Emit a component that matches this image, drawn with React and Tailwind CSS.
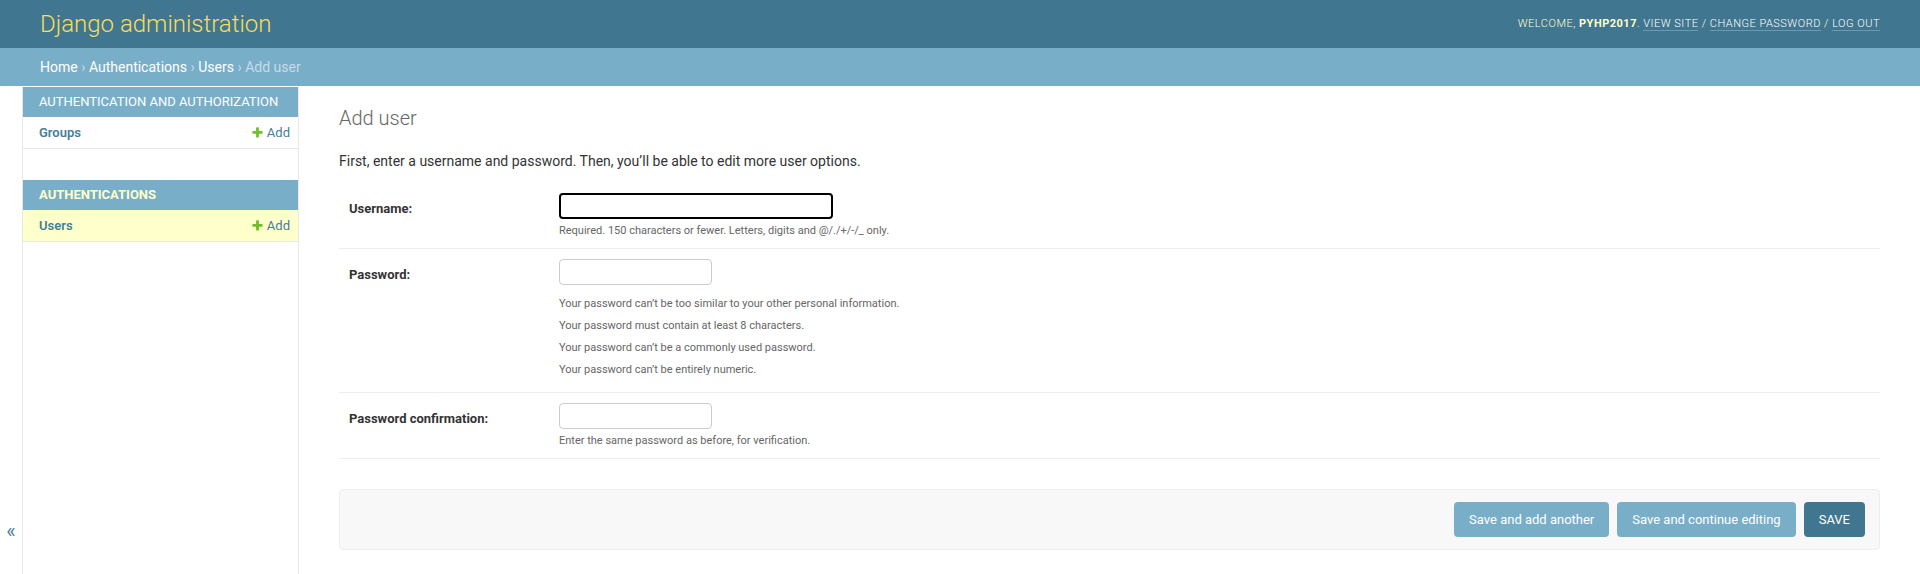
import React from 'react';

const PlusIcon = () => (
  <svg width="13" height="13" viewBox="0 0 1792 1792" className="absolute left-0 top-[1px]">
    <path
      fill="#70bf2b"
      d="M1600 796v192q0 40-28 68t-68 28h-416v416q0 40-28 68t-68 28h-192q-40 0-68-28t-28-68v-416h-416q-40 0-68-28t-28-68v-192q0-40 28-68t68-28h416v-416q0-40 28-68t68-28h192q40 0 68 28t28 68v416h416q40 0 68 28t28 68z"
    />
  </svg>
);

const SidebarModule = ({ caption, current, models }) => (
  <div className="mb-[31px]">
    <div
      className={`flex h-[30px] items-center whitespace-nowrap pl-[16px] pr-[8px] text-[13px] uppercase ${
        current ? 'bg-[#79aec8] font-bold text-[#ffffcc]' : 'bg-[#79aec8] font-normal text-white'
      }`}
    >
      {caption}
    </div>
    {models.map((m) => (
      <div
        key={m.name}
        className={`flex h-[32px] items-start justify-between border-b border-[#e8e8e8] pl-[16px] pr-[8px] pt-[8px] text-[13px] leading-[16px] ${
          m.current ? 'bg-[#ffffcc]' : 'bg-white'
        }`}
      >
        <a className="font-semibold text-[#447e9b]">{m.name}</a>
        <a className="relative pl-[16px] text-[#447e9b]">
          <PlusIcon />
          Add
        </a>
      </div>
    ))}
  </div>
);

const FormRow = ({ label, focused, wide, children }) => (
  <div className="flex border-b border-[#eeeeee] px-[10px] pt-[10px]">
    <label className="mt-[8px] w-[210px] shrink-0 text-[13px] font-bold leading-[16px] text-[#333]">{label}</label>
    <div className="flex flex-col">
      <div
        className={`h-[26px] rounded-[4px] bg-white ${wide ? 'w-[274px]' : 'w-[153px]'} ${
          focused ? 'border-2 border-black' : 'border border-[#cccccc]'
        }`}
      />
      {children}
    </div>
  </div>
);

const App = () => {
  const passwordHelp = [
    'Your password can’t be too similar to your other personal information.',
    'Your password must contain at least 8 characters.',
    'Your password can’t be a commonly used password.',
    'Your password can’t be entirely numeric.',
  ];

  return (
    <div className="flex min-h-[574px] flex-col bg-white font-[Roboto,'Lucida_Grande',sans-serif] text-[14px] text-[#333]">
      <header className="flex h-[48px] items-center justify-between bg-[#417690] px-[40px]">
        <h1 className="text-[24px] font-light leading-[28px] text-[#f5dd5d]">Django administration</h1>
        <div className="text-[11px] font-light uppercase leading-[14px] tracking-[0.5px] text-[#ffffcc]">
          Welcome, <strong className="font-bold">pyhp2017</strong>.{' '}
          <a className="border-b border-white/25 text-white">View site</a> /{' '}
          <a className="border-b border-white/25 text-white">Change password</a> /{' '}
          <a className="border-b border-white/25 text-white">Log out</a>
        </div>
      </header>

      <div className="flex h-[38px] items-center bg-[#79aec8] px-[40px] text-[14px] leading-[18px] text-[#c4dce8]">
        <a className="text-white">Home</a>
        <span className="px-[3.5px]">›</span>
        <a className="text-white">Authentications</a>
        <span className="px-[3.5px]">›</span>
        <a className="text-white">Users</a>
        <span className="px-[3.5px]">›</span>
        <span>Add user</span>
      </div>

      <div className="flex flex-1">
        <div className="flex w-[23px] shrink-0 justify-center border-r border-[#e8e8e8] pt-[433px] text-[20px] leading-[24px] text-[#447e9b]">
          «
        </div>

        <nav className="w-[276px] shrink-0 border-r border-[#e8e8e8] pt-[1px]">
          <SidebarModule
            caption="Authentication and Authorization"
            models={[{ name: 'Groups' }]}
          />
          <SidebarModule
            caption="Authentications"
            current
            models={[{ name: 'Users', current: true }]}
          />
        </nav>

        <main className="flex-1 px-[40px] pb-[20px] pt-[20px]">
          <h1 className="mb-[21px] text-[20px] font-light leading-[24px] text-[#666]">Add user</h1>
          <p className="mb-[12px] leading-[20px]">
            First, enter a username and password. Then, you’ll be able to edit more user options.
          </p>

          <div>
            <FormRow label="Username:" focused wide>
              <div className="mb-[10px] mt-[5px] text-[11px] leading-[14px] text-[#666]">
                Required. 150 characters or fewer. Letters, digits and @/./+/-/_ only.
              </div>
            </FormRow>
            <FormRow label="Password:">
              <ul className="mb-[11px] mt-[8px] text-[11px] text-[#666]">
                {passwordHelp.map((t) => (
                  <li key={t} className="h-[22px] leading-[22px]">
                    {t}
                  </li>
                ))}
              </ul>
            </FormRow>
            <FormRow label="Password confirmation:">
              <div className="mb-[10px] mt-[5px] text-[11px] leading-[14px] text-[#666]">
                Enter the same password as before, for verification.
              </div>
            </FormRow>
          </div>

          <div className="mt-[30px] flex justify-end gap-[8px] rounded-[4px] border border-[#eeeeee] bg-[#f8f8f8] px-[14px] py-[12px]">
            <button className="h-[35px] rounded-[4px] bg-[#79aec8] px-[15px] text-[13px] text-white">
              Save and add another
            </button>
            <button className="h-[35px] rounded-[4px] bg-[#79aec8] px-[15px] text-[13px] text-white">
              Save and continue editing
            </button>
            <button className="h-[35px] rounded-[4px] bg-[#417690] px-[15px] text-[13px] uppercase text-white">
              Save
            </button>
          </div>
        </main>
      </div>
    </div>
  );
};

export default App;
